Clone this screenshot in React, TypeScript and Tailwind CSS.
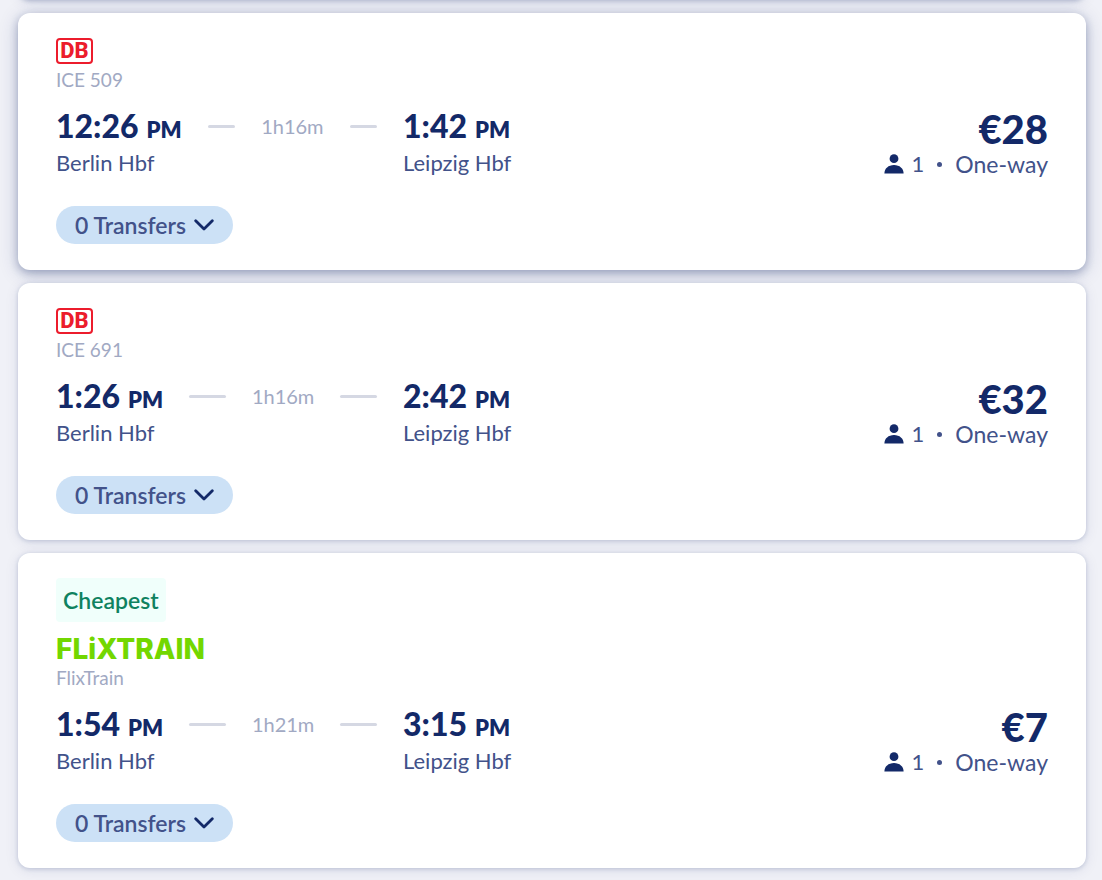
import clsx from "clsx";

type Trip = {
  id: string;
  operator: "db" | "flixtrain";
  train: string;
  departure: string;
  arrival: string;
  duration: string;
  price: string;
  cheapest?: boolean;
  raised?: boolean;
};

const TRIPS: Trip[] = [
  {
    id: "ice-509",
    operator: "db",
    train: "ICE 509",
    departure: "12:26",
    arrival: "1:42",
    duration: "1h16m",
    price: "€28",
    raised: true,
  },
  {
    id: "ice-691",
    operator: "db",
    train: "ICE 691",
    departure: "1:26",
    arrival: "2:42",
    duration: "1h16m",
    price: "€32",
  },
  {
    id: "flixtrain",
    operator: "flixtrain",
    train: "FlixTrain",
    departure: "1:54",
    arrival: "3:15",
    duration: "1h21m",
    price: "€7",
    cheapest: true,
  },
];

function OperatorLogo({ operator }: { operator: Trip["operator"] }) {
  if (operator === "db") {
    return (
      <div className="flex h-[26px] w-[37px] items-center justify-center rounded border-2 border-[#ec1c2c] bg-white font-['Roboto',sans-serif] text-[22px] leading-none font-extrabold text-[#ec1c2c]">
        DB
      </div>
    );
  }
  return (
    <div className="flex h-[26px] items-center font-['Inter',sans-serif] text-[28px] leading-none font-extrabold text-[#73d700]">
      FLiXTRAIN
    </div>
  );
}

function Time({ value }: { value: string }) {
  return (
    <span className="flex items-baseline gap-2 text-[32px] leading-10 font-black whitespace-nowrap text-[#132968]">
      {value}
      <span className="text-[22px] leading-none font-extrabold">PM</span>
    </span>
  );
}

function Dash() {
  return <span className="h-[3px] flex-1 rounded-full bg-[#d5d8e3]" aria-hidden />;
}

function PersonIcon() {
  return (
    <svg className="h-5 w-5" viewBox="0 0 20 20" fill="#132968" aria-hidden>
      <circle cx="10" cy="4.7" r="4.4" />
      <path d="M.4 19.5c0-5 4-8.5 9.6-8.5s9.6 3.5 9.6 8.5z" />
    </svg>
  );
}

function ChevronIcon() {
  return (
    <svg className="h-3 w-5" viewBox="0 0 20 12" fill="none" aria-hidden>
      <path
        d="M1.7 1.7 10 10l8.3-8.3"
        stroke="#132968"
        strokeWidth="2.8"
        strokeLinecap="round"
        strokeLinejoin="round"
      />
    </svg>
  );
}

function TripCard({ trip }: { trip: Trip }) {
  return (
    <li
      className={clsx(
        "rounded-xl bg-white px-[38px] pt-[25px] pb-[26px]",
        trip.raised
          ? "shadow-[0_3px_8px_rgba(19,41,104,0.3),0_3px_20px_rgba(19,41,104,0.2)]"
          : "shadow-[0_1px_4px_rgba(19,41,104,0.18),0_2px_14px_rgba(19,41,104,0.1)]",
      )}
    >
      {trip.cheapest && (
        <div className="mb-[14px] flex h-11 w-fit items-center rounded bg-[#f0fffb] px-[7px] text-[23px] font-semibold text-[#0f8260]">
          Cheapest
        </div>
      )}
      <OperatorLogo operator={trip.operator} />
      <p className="mt-1 text-[19px] leading-6 text-[#a1a9c3]">{trip.train}</p>

      <div className="mt-[14px] flex items-start justify-between">
        <div className="grid grid-cols-[347px_auto] gap-y-0.5">
          <div className="flex items-center gap-[26px] pr-[26px]">
            <Time value={trip.departure} />
            <Dash />
            <span className="text-[20px] leading-10 text-[#a1a9c3]">{trip.duration}</span>
            <Dash />
          </div>
          <Time value={trip.arrival} />
          <span className="text-[22px] leading-[30px] text-[#42528a]">Berlin Hbf</span>
          <span className="text-[22px] leading-[30px] text-[#42528a]">Leipzig Hbf</span>
        </div>

        <div className="flex flex-col items-end gap-px pt-[3px]">
          <strong className="text-[40px] leading-10 font-black text-[#132968]">{trip.price}</strong>
          <div className="flex items-center text-[22px] leading-7 text-[#42528a]">
            <PersonIcon />
            <span className="ml-2">1</span>
            <span className="mx-[13px] h-[5px] w-[5px] rounded-full bg-[#42528a]" aria-hidden />
            <span className="text-[23px]">One-way</span>
          </div>
        </div>
      </div>

      <button
        type="button"
        className="mt-7 flex h-[38px] items-center gap-2 rounded-full bg-[#cce1f6] px-[19px] text-[23px] font-semibold text-[#42528a]"
      >
        0 Transfers
        <ChevronIcon />
      </button>
    </li>
  );
}

export default function App() {
  return (
    <main className="min-h-screen overflow-hidden bg-[#f0f1f7] pr-4 pb-3 pl-[18px] font-['Lato',sans-serif]">
      {/* bottom edge of the card scrolled out of view */}
      <div
        className="-mt-8 mb-[13px] h-8 rounded-xl bg-white shadow-[0_1px_4px_rgba(19,41,104,0.25),0_2px_14px_rgba(19,41,104,0.1)]"
        aria-hidden
      />
      <ul className="flex flex-col gap-[13px]">
        {TRIPS.map((trip) => (
          <TripCard key={trip.id} trip={trip} />
        ))}
      </ul>
    </main>
  );
}
